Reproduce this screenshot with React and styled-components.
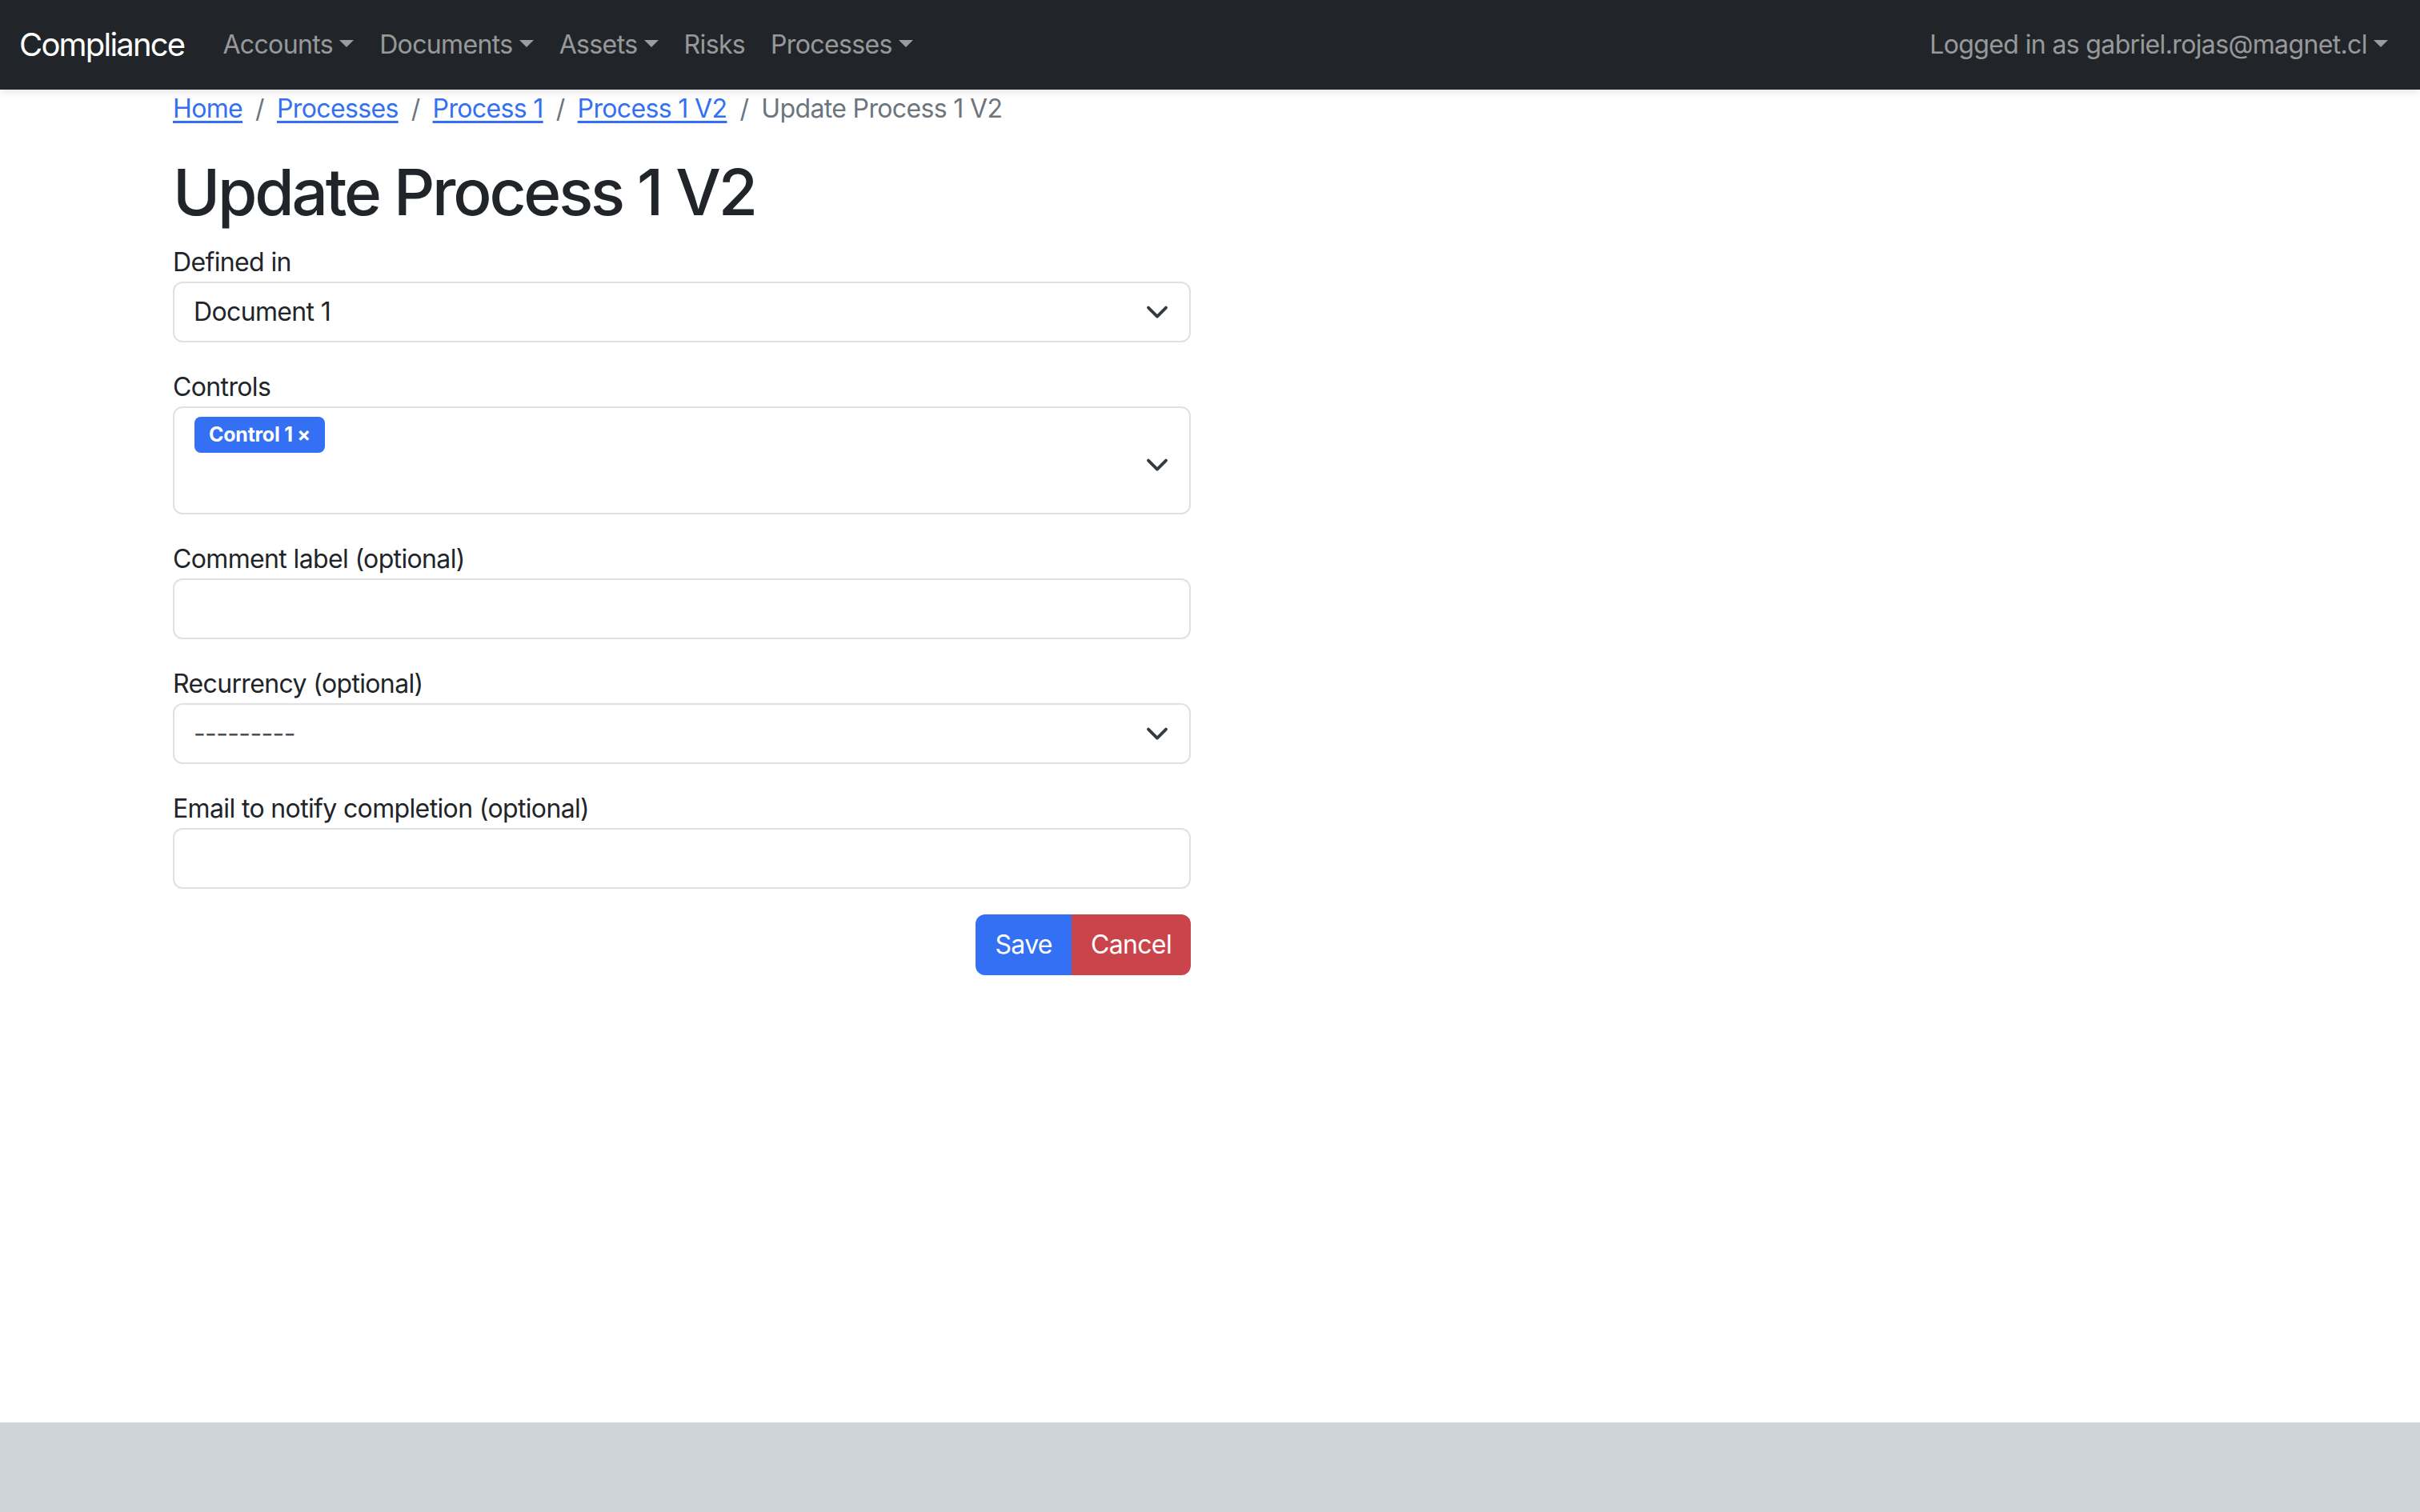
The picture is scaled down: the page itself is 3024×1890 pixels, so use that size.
import React from "react";
import styled, { createGlobalStyle } from "styled-components";

const GlobalStyle = createGlobalStyle`
  * { box-sizing: border-box; }
  body {
    margin: 0;
    font-family: Inter, "Noto Sans", sans-serif;
    font-size: 32px;
    line-height: 1.5;
    color: #212529;
    background: #fff;
    letter-spacing: -0.02em;
  }
`;

const Page = styled.div`
  display: flex;
  flex-direction: column;
  min-height: 100vh;
`;

const Navbar = styled.nav`
  position: relative;
  z-index: 2;
  height: 112px;
  background: #212529;
  box-shadow: 0 2px 10px rgba(0, 0, 0, 0.12);
  display: flex;
  align-items: center;
  justify-content: space-between;
  padding: 0 24px;
`;

const NavLeft = styled.div`
  display: flex;
  align-items: center;
`;

const Brand = styled.a`
  font-size: 40px;
  color: #fff;
  text-decoration: none;
  margin-right: 32px;
  letter-spacing: -0.045em;
`;

const NavLink = styled.a`
  color: rgba(255, 255, 255, 0.55);
  text-decoration: none;
  padding: 0 16px;
  white-space: nowrap;
`;

const Caret = styled.span`
  display: inline-block;
  margin-left: 0.255em;
  vertical-align: 0.255em;
  border-top: 0.3em solid;
  border-left: 0.3em solid transparent;
  border-right: 0.3em solid transparent;
`;

const Main = styled.main`
  flex: 1;
`;

const Container = styled.div`
  max-width: 2640px;
  margin: 0 auto;
  padding: 0 24px;
`;

const Breadcrumb = styled.ol`
  display: flex;
  list-style: none;
  margin: 0 0 32px;
  padding: 0;
`;

const Crumb = styled.li`
  color: ${(p) => (p.$active ? "#6c757d" : "#3370f3")};

  &:not(:first-child)::before {
    content: "/";
    color: #6c757d;
    padding: 0 16px;
  }

  a {
    color: #3370f3;
    text-decoration: underline;
    text-underline-offset: 4px;
  }
`;

const Title = styled.h1`
  font-size: 80px;
  font-weight: 500;
  line-height: 1.2;
  margin: 0 0 16px;
  letter-spacing: -0.04em;
`;

const Form = styled.form`
  width: 1272px;
`;

const Field = styled.div`
  margin-bottom: 32px;
`;

const Label = styled.label`
  display: block;
  line-height: 48px;
`;

const Box = styled.div`
  display: flex;
  align-items: ${(p) => (p.$tall ? "flex-start" : "center")};
  justify-content: space-between;
  min-height: ${(p) => (p.$tall ? "135px" : "76px")};
  padding: ${(p) => (p.$tall ? "11px 24px 0 25px" : "0 24px")};
  border: 2px solid #dee2e6;
  border-radius: 12px;
  background: #fff;
  color: ${(p) => (p.$muted ? "#495057" : "#212529")};
`;

const Chevron = styled.svg`
  width: 32px;
  height: 24px;
  flex: none;
  align-self: center;
`;

const Tag = styled.span`
  display: inline-flex;
  align-items: center;
  height: 45px;
  padding: 0 18px;
  border-radius: 8px;
  background: #3370f3;
  color: #fff;
  font-size: 25px;
  font-weight: 700;
  letter-spacing: -0.01em;
`;

const Actions = styled.div`
  display: flex;
  justify-content: flex-end;
`;

const Button = styled.button`
  height: 76px;
  padding: 0 24px;
  border: none;
  font: inherit;
  letter-spacing: inherit;
  color: #fff;
  background: ${(p) => (p.$variant === "danger" ? "#c9454b" : "#3370f3")};

  &:first-child {
    border-radius: 12px 0 0 12px;
  }
  &:last-child {
    border-radius: 0 12px 12px 0;
  }
`;

const Footer = styled.footer`
  height: 112px;
  background: #cfd4d8;
`;

const ChevronIcon = () => (
  <Chevron viewBox="0 0 16 12">
    <path
      d="m2.5 3.3 5.5 5.5 5.5-5.5"
      fill="none"
      stroke="#343a40"
      strokeWidth="1.9"
      strokeLinecap="round"
      strokeLinejoin="round"
    />
  </Chevron>
);

const SelectField = ({ label, value, muted }) => (
  <Field>
    <Label>{label}</Label>
    <Box $muted={muted}>
      <span>{value}</span>
      <ChevronIcon />
    </Box>
  </Field>
);

const InputField = ({ label }) => (
  <Field>
    <Label>{label}</Label>
    <Box />
  </Field>
);

export default function App() {
  return (
    <Page>
      <GlobalStyle />
      <Navbar>
        <NavLeft>
          <Brand href="#">Compliance</Brand>
          <NavLink href="#">
            Accounts<Caret />
          </NavLink>
          <NavLink href="#">
            Documents<Caret />
          </NavLink>
          <NavLink href="#">
            Assets<Caret />
          </NavLink>
          <NavLink href="#">Risks</NavLink>
          <NavLink href="#">
            Processes<Caret />
          </NavLink>
        </NavLeft>
        <NavLink href="#">
          Logged in as gabriel.rojas@magnet.cl<Caret />
        </NavLink>
      </Navbar>
      <Main>
        <Container>
          <Breadcrumb>
            <Crumb><a href="#">Home</a></Crumb>
            <Crumb><a href="#">Processes</a></Crumb>
            <Crumb><a href="#">Process 1</a></Crumb>
            <Crumb><a href="#">Process 1 V2</a></Crumb>
            <Crumb $active>Update Process 1 V2</Crumb>
          </Breadcrumb>
          <Title>Update Process 1 V2</Title>
          <Form>
            <SelectField label="Defined in" value="Document 1" />
            <Field>
              <Label>Controls</Label>
              <Box $tall>
                <Tag>Control 1 ×</Tag>
                <ChevronIcon />
              </Box>
            </Field>
            <InputField label="Comment label (optional)" />
            <SelectField label="Recurrency (optional)" value="---------" muted />
            <InputField label="Email to notify completion (optional)" />
            <Actions>
              <Button type="button">Save</Button>
              <Button type="button" $variant="danger">Cancel</Button>
            </Actions>
          </Form>
        </Container>
      </Main>
      <Footer />
    </Page>
  );
}
